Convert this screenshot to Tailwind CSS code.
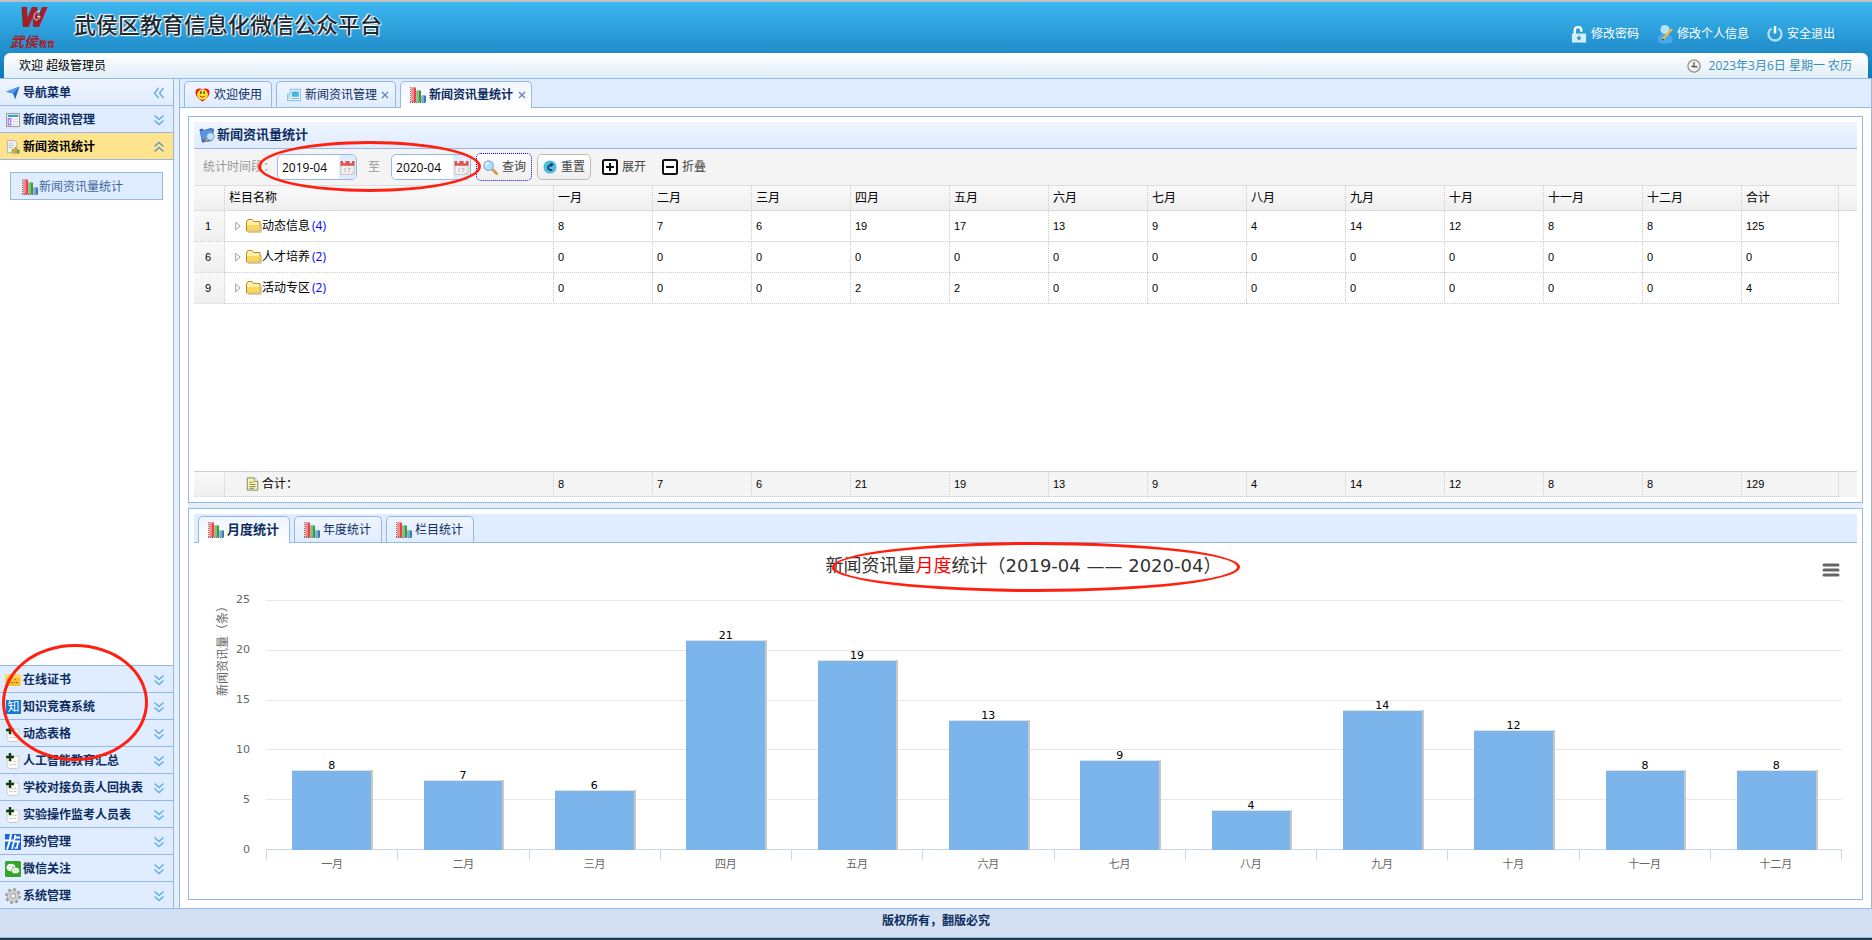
<!DOCTYPE html>
<html lang="zh-CN">
<head>
  <meta charset="UTF-8" />
  <title>武侯区教育信息化微信公众平台</title>
  <meta name="viewport" content="width=device-width, initial-scale=1.0" />
  <script src="https://cdn.jsdelivr.net/npm/@tailwindcss/browser@4"></script>
</head>
<body class="flex h-screen min-h-[720px] flex-col overflow-x-hidden bg-white font-['Open_Sans','Noto_Sans_CJK_SC',sans-serif] text-xs text-black">
  <!-- Icon sprite -->
  <svg class="hidden" aria-hidden="true">
    <symbol id="i-down" viewBox="0 0 12 12"><path d="M1.500 1.500 6 5.500 10.500 1.500M1.500 6.500 6 10.500 10.500 6.500" fill="none" stroke="#62b0ea" stroke-width="1.500"/></symbol>
    <symbol id="i-up" viewBox="0 0 12 12"><path d="M1.500 5.500 6 1.500 10.500 5.500M1.500 10.500 6 6.500 10.500 10.500" fill="none" stroke="#5b9fc0" stroke-width="1.500"/></symbol>
    <symbol id="i-left" viewBox="0 0 12 12"><path d="M5.500 1 1.500 6 5.500 11M10.500 1 6.500 6 10.500 11" fill="none" stroke="#62b0ea" stroke-width="1.500"/></symbol>
    <symbol id="i-nav" viewBox="0 0 16 16"><path d="M0 6.500 15.500.5 10.500 15 8 8.500z" fill="#2468cc"/><path d="M0 6.500 15.500.5 8 8.500z" fill="#5b9cf2"/></symbol>
    <symbol id="i-layout" viewBox="0 0 16 16"><path d="M.5.5h15v15H.5z" fill="#fff" stroke="#888"/><path d="M2 2h12v2.500H2z" fill="#2f9bd0"/><path d="M2.500 6.500h3v7h-3z" fill="#eee5ff" stroke="#9b6bf0" stroke-width="1.300"/><path d="M7.500 6.500H14v1H7.500zm0 3H14v1H7.500zm0 3H14v1H7.500z" fill="#b9c4d6"/></symbol>
    <symbol id="i-report" viewBox="0 0 16 16"><path d="M1.500.5h8l3 3v11h-11z" fill="#f4f4f4" stroke="#aaa"/><path d="M3 3h5v1H3zm0 2.500h6v1H3zM3 8h4v1H3z" fill="#bbb"/><path d="M6.500 10h3v5.500h-3z" fill="#8cc63f"/><path d="M9.500 8h3v7.500h-3z" fill="#e8963a"/><path d="M12.500 11h3v4.500h-3z" fill="#5aa354"/></symbol>
    <symbol id="i-bars" viewBox="0 0 16 16"><path d="M.5 0v16M0 15.500h16" stroke="#777" stroke-dasharray="1 1"/><path d="M1.500.5h4.500v15H1.500z" fill="#e8434b"/><path d="M2 1h2v13.500H2z" fill="#ff8585"/><path d="M6.500 3.500H11v12H6.500z" fill="#43953f"/><path d="M7 4h2v11H7z" fill="#7fc278"/><path d="M11.500 8.500h4.500v7h-4.500z" fill="#3c78b4"/><path d="M12 9h2v6h-2z" fill="#78aee0"/></symbol>
    <symbol id="i-smile" viewBox="0 0 16 16"><path d="M8 15.500C4 13 .5 9.500.5 5.500S5 .5 8 2.500c3-2 7.500-1 7.500 3S12 13 8 15.500z" fill="#f01818"/><circle cx="8" cy="8" r="5.700" fill="#ffe92e"/><path d="M6.300 4.500v3M9.700 4.500v3" stroke="#222" stroke-width="1.300"/><path d="M5 9.500q3 3 6 0" fill="none" stroke="#a02010"/></symbol>
    <symbol id="i-news" viewBox="0 0 16 16"><path d="M3.500 1.500h12v13h-15V7h3z" fill="#e4f2fa" stroke="#7fb5cf"/><path d="M5.500 4h8v6h-8z" fill="#45b3e6"/><path d="M5 12h9M2.500 8v5" stroke="#7fb5cf"/></symbol>
    <symbol id="i-find" viewBox="0 0 16 16"><path d="M.5 2.500 3 1.500l2 1.500 7-2 3 1-2 12-10 1.500z" fill="#2f62b5"/><path d="M1 4l13-2-4 9-7 2z" fill="#5b93dc"/><circle cx="11.500" cy="9.500" r="3.800" fill="#bfe4fa" stroke="#6fa9d8"/><path d="m9 12-3 2" stroke="#e0a060" stroke-width="2"/></symbol>
    <symbol id="i-cal" viewBox="0 0 16 16"><path d="M1 5h14v10.500H1z" fill="#f4f0ee" stroke="#c5c1bf"/><path d="M.5 1h15v5H.5z" fill="#df5450"/><path d="M4.500 0v3.500M11.500 0v3.500" stroke="#eee" stroke-width="2.500"/><path d="M5.500 13V9l-1 1M8 9h3l-2 4" fill="none" stroke="#b5b5b5"/><path d="m11 15 4-4v4z" fill="#d8d8d8"/></symbol>
    <symbol id="i-search" viewBox="0 0 16 16"><path d="m10 10 4.500 4.500" stroke="#dc963c" stroke-width="3" stroke-linecap="round"/><circle cx="6" cy="6" r="5" fill="#b4dcfa" stroke="#8db4dc" stroke-width="1.500"/><path d="M3 6a3 3 0 0 1 3-3" stroke="#fff" fill="none" stroke-width="1.500"/></symbol>
    <symbol id="i-reset" viewBox="0 0 16 16"><circle cx="8" cy="8" r="7.500" fill="#50bce0"/><path d="M10.500 11.500c-5 1-7-5-1-6" fill="none" stroke="#124560" stroke-width="2"/><path d="m8.500 2.500 4 2.700-3.500 3z" fill="#124560"/></symbol>
    <symbol id="i-plus" viewBox="0 0 16 16"><rect x="1" y="1" width="14" height="14" rx="1.500" fill="#fff" stroke="#111" stroke-width="2"/><path d="M4 8h8M8 4v8" stroke="#111" stroke-width="2"/></symbol>
    <symbol id="i-minus" viewBox="0 0 16 16"><rect x="1" y="1" width="14" height="14" rx="1.500" fill="#fff" stroke="#111" stroke-width="2"/><path d="M4 8h8" stroke="#111" stroke-width="2"/></symbol>
    <symbol id="i-folder" viewBox="0 0 16 14"><path d="M.5 11.500V3L2 .5h4L7.500 2.500h6.500v9.500H.5z" fill="#fff0a8" stroke="#b88622"/><path d="M1 6h12.500v5.500H1z" fill="#f8d75e"/><path d="M2 13.200h13.200V5" fill="none" stroke="#c9b98f"/></symbol>
    <symbol id="i-file" viewBox="0 0 14 16"><path d="M1 1h8l4 4v10H1z" fill="#fdf6a0" stroke="#777"/><path d="M9 1v4h4" fill="#fff" stroke="#777"/><path d="M3.500 6h4m-4 2.500h7m-7 2.500h7M3.500 13h5" stroke="#777"/></symbol>
    <symbol id="i-card" viewBox="0 0 16 16"><path d="M.5 2h15v12H.5z" fill="#f6c02c"/><path d="M.5 2h15v3.500H.5z" fill="#ffdc66"/><path d="M3 7.500h1m1 0h1m4 0h1M3 10.500h2m1 0h2m1 0h1m1 0h2" stroke="#946810"/></symbol>
    <symbol id="i-form" viewBox="0 0 16 16"><path d="M2 3h12v11l-2 1.500H4L2 13z" fill="#fafaf7" stroke="#cdcdc6"/><path d="M4.500 8.500h3m1 0h3m-7 3h3m1 0h3" stroke="#ccc"/><path d="M1 4h8M5 0v8" stroke="#123e0c" stroke-width="2.500"/></symbol>
    <symbol id="i-book" viewBox="0 0 16 16"><path d="M0 0h16v16H0z" fill="#1769dd"/><path d="M0 6.500h8M6 0 4.500 8 2 15.500M10 3.500h5M9 7.500h6" stroke="#fff" stroke-width="2" fill="none"/><path d="M10.500 1 7 15M13 8l-1 6h-2.500" stroke="#fff" stroke-width="1.700" fill="none"/></symbol>
    <symbol id="i-wechat" viewBox="0 0 16 16"><rect width="16" height="16" rx="1.500" fill="#35a52a"/><ellipse cx="6" cy="6.500" rx="4.500" ry="3.800" fill="#fff"/><ellipse cx="10.500" cy="9.500" rx="4" ry="3.300" fill="#fff" stroke="#35a52a" stroke-width=".7"/><path d="M4.500 5.500h.8M7.500 5.500h.8M9 9h.8M11.500 9h.8" stroke="#35a52a"/></symbol>
    <symbol id="i-gear" viewBox="0 0 16 16"><circle cx="8" cy="8" r="6.700" fill="none" stroke="#9c9c9c" stroke-width="2.500" stroke-dasharray="2.800 2.460"/><circle cx="8" cy="8" r="4.300" fill="none" stroke="#a8a8a8" stroke-width="3.400"/><circle cx="8" cy="8" r="4.200" fill="none" stroke="#d6d6d6" stroke-width="2"/><circle cx="8" cy="8" r="2.300" fill="#f5f8ff" stroke="#999" stroke-width=".8"/></symbol>
    <symbol id="i-lock" viewBox="0 0 16 18"><path d="M3.500 9V4.500a3.500 3.500 0 0 1 7 0V6" fill="none" stroke="#fff" stroke-width="2.500"/><path d="M.5 8h15v9.500H.5z" fill="#d5f0fc"/><path d="M8 10v4M6 12l2 2.500 2-2.500" stroke="#2a96cd" stroke-width="1.500" fill="none"/></symbol>
    <symbol id="i-user" viewBox="0 0 16 20"><path d="M1 18c-2-6 3-7 3-9 0 0-2-8 4-8s4 8 4 8c0 2 5 3 3 9-3 2-11 2-14 0z" fill="#48a8f0"/><circle cx="8" cy="5.500" r="4.500" fill="#b5e2fc"/><path d="M5.500 15.500 15 5" stroke="#f2b63a" stroke-width="2.500"/><path d="m5 16 1.500-.5L6 15z" stroke="#444"/></symbol>
    <symbol id="i-power" viewBox="0 0 16 16"><path d="M4.500 2.500a6.500 6.500 0 1 0 7 0" fill="none" stroke="#b5e0f5" stroke-width="2.300"/><path d="M8 0v7.500" stroke="#fff" stroke-width="2.500"/></symbol>
    <symbol id="i-clock" viewBox="0 0 16 16"><circle cx="8" cy="8" r="7" fill="#f4f4ee" stroke="#909090" stroke-width="1.500"/><path d="M8 3.500V9h4M5 8.500h3" fill="none" stroke="#444" stroke-width="1.300"/></symbol>
    <symbol id="i-tri" viewBox="0 0 6 10"><path d="M.7 1.200 5.200 5 .7 8.800z" fill="#fff" stroke="#a0a0a0"/></symbol>
  </svg>

  <!-- Header -->
  <header class="border-t-2 border-[#c0c0c0] bg-linear-to-b from-[#3cb7ef] to-[#0f78b8]">
    <div class="flex h-[51px] items-start">
      <svg class="ml-2 h-12 w-12 shrink-0" viewBox="0 0 48 48" fill="#a3202a" stroke="#a3202a" role="img" aria-label="武侯教育">
        <text x="13" y="24" font-family="Liberation Sans" font-size="25" font-weight="bold" font-style="italic" stroke-width="2">W</text>
        <path d="M32 9c-6 0-8 8-4 9 2 0 4-2 4-4l-3 1" fill="none" stroke="#d9edf8" stroke-width="1"/>
        <text x="2" y="45" font-family="Noto Sans CJK SC" font-size="14" font-weight="bold" font-style="italic" stroke="none">武侯</text>
        <text x="31" y="45" font-family="Noto Sans CJK SC" font-size="8" font-weight="bold" stroke="none">教育</text>
      </svg>
      <h1 class="ml-[18px] text-[22px] leading-11 font-medium text-[#1c2a33] text-shadow-[0_0_2px_#fff,0_0_2px_#fff,1px_1px_1px_#fff,-1px_-1px_1px_#fff]">武侯区教育信息化微信公众平台</h1>
      <nav class="mt-5 mr-[37px] ml-auto flex items-center gap-[18px] text-white">
        <a href="#" class="flex h-6 items-center gap-1"><svg class="h-[17px] w-4"><use href="#i-lock"/></svg>修改密码</a>
        <a href="#" class="flex h-6 items-center gap-1"><svg class="h-5 w-4"><use href="#i-user"/></svg>修改个人信息</a>
        <a href="#" class="flex h-6 items-center gap-1"><svg class="size-4"><use href="#i-power"/></svg>安全退出</a>
      </nav>
    </div>
    <div class="mx-1 flex h-[25px] items-center justify-between rounded-t-md bg-linear-to-b from-white to-[#e0eef7] pr-4 pl-[15px]">
      <span>欢迎 超级管理员</span>
      <span class="flex items-center gap-2 text-[#3c8dbc]"><svg class="size-[14px]"><use href="#i-clock"/></svg>2023年3月6日 星期一 农历</span>
    </div>
  </header>

  <div class="flex min-h-0 flex-1 border-t border-[#95b8e7] bg-[#e6eef8]">
    <!-- Sidebar -->
    <aside class="flex w-[174px] shrink-0 flex-col border-r border-[#95b8e7] bg-white font-bold text-[#0e2d5f]">
      <div class="flex h-[27px] items-center gap-[3px] border-b border-[#95b8e7] bg-linear-to-b from-[#eff5ff] to-[#e0ecff] pt-0.5 pr-2 pl-1.5"><svg class="size-[14px]"><use href="#i-nav"/></svg>导航菜单<button type="button" class="ml-auto" aria-label="收起"><svg class="size-3"><use href="#i-left"/></svg></button></div>
      <button type="button" class="flex h-[27px] items-center gap-[3px] border-b border-[#95b8e7] bg-[#e0ecff] pt-0.5 pr-2 pl-1.5"><svg class="h-4 w-[14px]" preserveAspectRatio="none"><use href="#i-layout"/></svg>新闻资讯管理<svg class="ml-auto size-3"><use href="#i-down"/></svg></button>
      <button type="button" class="flex h-[27px] items-center gap-[3px] border-b border-[#95b8e7] bg-[#ffe48d] pt-0.5 pr-2 pl-1.5 text-black"><svg class="h-4 w-[14px]"><use href="#i-report"/></svg>新闻资讯统计<svg class="ml-auto size-3"><use href="#i-up"/></svg></button>
      <div class="flex-1 px-2.5 py-3 font-normal">
        <a href="#" class="flex h-7 items-center gap-px border border-[#95b8e7] bg-[#e0ecff] pt-0.5 pl-[11px] text-[#3f66a0]"><svg class="size-4"><use href="#i-bars"/></svg>新闻资讯量统计</a>
      </div>
      <div id="menu" class="relative">
        <div class="pointer-events-none absolute -top-[21px] left-0.5 h-[117px] w-[146px] rounded-[50%] border-3 border-[#ff2010]"></div>
      </div>
    </aside>

    <!-- Workspace -->
    <main class="ml-[5px] flex min-w-0 flex-1 flex-col border-x border-[#95b8e7] bg-white">
      <div class="flex h-[29px] shrink-0 items-end gap-1 border-b border-[#95b8e7] bg-[#e0ecff] pl-1 text-[#0e2d5f]" role="tablist">
        <button type="button" role="tab" class="flex h-[26px] w-[88px] items-center gap-1 rounded-t-[5px] border border-b-0 border-[#95b8e7] bg-linear-to-b from-[#eff5ff] to-[#e0ecff] pl-2.5"><svg class="size-[15px]"><use href="#i-smile"/></svg>欢迎使用</button>
        <button type="button" role="tab" class="flex h-[26px] w-[120px] items-center gap-1 rounded-t-[5px] border border-b-0 border-[#95b8e7] bg-linear-to-b from-[#eff5ff] to-[#e0ecff] pl-2.5"><svg class="size-[14px]"><use href="#i-news"/></svg>新闻资讯管理<svg class="size-2" viewBox="0 0 8 8" stroke="#5f86ba" stroke-width="1.300"><path d="m1 1 6 6M7 1 1 7"/></svg></button>
        <button type="button" role="tab" aria-selected="true" class="-mb-px flex h-[27px] w-[132px] items-center gap-[3px] rounded-t-[5px] border border-b-0 border-[#95b8e7] bg-linear-to-b from-[#eff5ff] to-white pl-[9px] font-bold"><svg class="size-4"><use href="#i-bars"/></svg>新闻资讯量统计<svg class="ml-0.5 size-2" viewBox="0 0 8 8" stroke="#5f86ba" stroke-width="1.300"><path d="m1 1 6 6M7 1 1 7"/></svg></button>
      </div>

      <div class="flex min-h-0 flex-1 flex-col p-2">
        <!-- Grid panel -->
        <section class="flex min-h-0 flex-[387_0_0px] flex-col border border-[#95b8e7] p-[5px]">
          <h2 class="flex h-[27px] shrink-0 items-center gap-0.5 border-b border-[#95b8e7] bg-linear-to-b from-[#eff5ff] to-[#e0ecff] pl-[5px] text-[13px] font-bold text-[#0e2d5f]"><svg class="size-4"><use href="#i-find"/></svg>新闻资讯量统计</h2>
          <form class="relative flex h-[37px] shrink-0 items-center border-b border-[#ddd] bg-[#f4f4f4] pl-[9px] text-[#444]" onsubmit="return false">
            <label for="from" class="w-[74px] text-[#999]">统计时间段：</label>
            <span class="flex h-[26px] w-20 items-center overflow-hidden rounded-[5px] border border-[#95b8e7] bg-white">
              <input id="from" type="text" value="2019-04" class="h-full w-[61px] pl-1 text-black outline-none" />
              <button type="button" class="h-full w-[17px] bg-[#e0ecff]" aria-label="选择开始月份"><svg class="mx-auto size-[15px]"><use href="#i-cal"/></svg></button>
            </span>
            <label for="to" class="px-[11px] text-[#999]">至</label>
            <span class="flex h-[26px] w-20 items-center overflow-hidden rounded-[5px] border border-[#95b8e7] bg-white">
              <input id="to" type="text" value="2020-04" class="h-full w-[61px] pl-1 text-black outline-none" />
              <button type="button" class="h-full w-[17px] bg-[#e0ecff]" aria-label="选择结束月份"><svg class="mx-auto size-[15px]"><use href="#i-cal"/></svg></button>
            </span>
            <button type="submit" class="ml-[5px] flex h-7 w-14 items-center gap-1 rounded-[5px] border border-dotted border-[#0000e0] bg-linear-to-b from-white to-[#eee] pl-1.5"><svg class="size-[15px]"><use href="#i-search"/></svg>查询</button>
            <button type="reset" class="ml-[5px] flex h-[26px] w-[54px] items-center gap-1 rounded-[5px] border border-[#bbb] bg-linear-to-b from-white to-[#eee] pl-[5px]"><svg class="size-[14px]"><use href="#i-reset"/></svg>重置</button>
            <button type="button" class="ml-[11px] flex items-center gap-1"><svg class="size-4"><use href="#i-plus"/></svg>展开</button>
            <button type="button" class="ml-4 flex items-center gap-1"><svg class="size-4"><use href="#i-minus"/></svg>折叠</button>
            <span class="pointer-events-none absolute -top-2 left-16 h-[51px] w-[223px] rounded-[50%] border-3 border-[#ff2010]"></span>
          </form>
          <div class="min-h-0 flex-1 overflow-hidden">
            <table class="w-full table-fixed border-separate border-spacing-0">
              <colgroup><col class="w-[31px]" /><col /><col class="w-[99px]" span="12" /><col class="w-[97px]" /><col class="w-[18px]" /></colgroup>
              <thead id="head"></thead>
              <tbody id="rows"></tbody>
            </table>
          </div>
          <table class="w-full shrink-0 table-fixed border-separate border-spacing-0">
            <colgroup><col class="w-[31px]" /><col /><col class="w-[99px]" span="12" /><col class="w-[97px]" /><col class="w-[18px]" /></colgroup>
            <tbody id="total"></tbody>
          </table>
        </section>
        <div class="h-[5px] shrink-0 bg-[#e6eef8]"></div>

        <!-- Chart panel -->
        <section class="flex min-h-0 flex-[392_0_0px] flex-col border border-[#95b8e7] p-[5px]">
          <div class="flex h-[29px] shrink-0 items-end gap-1 border-b border-[#95b8e7] bg-[#e0ecff] pl-1 text-[#0e2d5f]" role="tablist">
            <button type="button" role="tab" aria-selected="true" class="-mb-px flex h-[27px] w-[92px] items-center gap-[3px] rounded-t-[5px] border border-b-0 border-[#95b8e7] bg-linear-to-b from-[#eff5ff] to-white pl-[9px] text-[13px] font-bold"><svg class="size-4"><use href="#i-bars"/></svg>月度统计</button>
            <button type="button" role="tab" class="flex h-[26px] w-[88px] items-center gap-[3px] rounded-t-[5px] border border-b-0 border-[#95b8e7] bg-linear-to-b from-[#eff5ff] to-[#e0ecff] pl-[9px]"><svg class="size-4"><use href="#i-bars"/></svg>年度统计</button>
            <button type="button" role="tab" class="flex h-[26px] w-[88px] items-center gap-[3px] rounded-t-[5px] border border-b-0 border-[#95b8e7] bg-linear-to-b from-[#eff5ff] to-[#e0ecff] pl-[9px]"><svg class="size-4"><use href="#i-bars"/></svg>栏目统计</button>
          </div>
          <div class="flex min-h-0 flex-1 flex-col pb-11 font-['DejaVu_Sans','Noto_Sans_CJK_SC',sans-serif] text-[11px] text-[#666]">
            <div class="relative h-[57px] shrink-0 pr-1 text-center">
              <h3 class="text-lg leading-[46px] text-[#333]">新闻资讯量<span class="text-[#ff0000]">月度</span>统计（2019-04 —— 2020-04）</h3>
              <span class="pointer-events-none absolute -top-px left-1/2 -ml-[194px] h-[50px] w-[408px] rounded-[50%] border-3 border-[#ff2010]"></span>
              <button type="button" class="absolute top-5 right-[17px]" aria-label="图表菜单"><svg class="h-[14px] w-[18px]" viewBox="0 0 18 14" stroke="#666" stroke-width="3" stroke-linecap="round"><path d="M2 2h14M2 7h14M2 12h14"/></svg></button>
            </div>
            <div class="flex min-h-0 flex-1 pr-[15px]">
              <div class="flex w-[72px] justify-between pr-4 pl-[21px]">
                <span class="rotate-180 self-start text-xs leading-4 [writing-mode:vertical-rl] [text-orientation:sideways]">新闻资讯量（条）</span>
                <div class="flex flex-col justify-between text-right leading-0">
                  <span class="h-0">25</span><span class="h-0">20</span><span class="h-0">15</span><span class="h-0">10</span><span class="h-0">5</span><span class="h-0">0</span>
                </div>
              </div>
              <div class="relative min-w-0 flex-1">
                <div class="absolute inset-0 flex flex-col justify-between">
                  <i class="h-px bg-[#e6e6e6]"></i><i class="h-px bg-[#e6e6e6]"></i><i class="h-px bg-[#e6e6e6]"></i><i class="h-px bg-[#e6e6e6]"></i><i class="h-px bg-[#e6e6e6]"></i><i class="h-px bg-[#ccd6eb]"></i>
                </div>
                <div id="bars" class="absolute inset-0 flex"></div>
                <div id="months" class="absolute inset-x-0 top-full flex border-r border-[#ccd6eb]"></div>
              </div>
            </div>
          </div>
        </section>
      </div>
    </main>
  </div>

  <footer class="shrink-0 border-b-2 border-[#203a48]">
    <p class="h-[30px] border-y border-[#95b8e7] bg-[#d2e0f2] text-center leading-6 font-bold text-[#0e2d5f]">版权所有，翻版必究</p>
  </footer>

  <script>
    const months = ['一月', '二月', '三月', '四月', '五月', '六月', '七月', '八月', '九月', '十月', '十一月', '十二月'];
    const rows = [
      { no: 1, name: '动态信息', count: 4, values: [8, 7, 6, 19, 17, 13, 9, 4, 14, 12, 8, 8, 125] },
      { no: 6, name: '人才培养', count: 2, values: [0, 0, 0, 0, 0, 0, 0, 0, 0, 0, 0, 0, 0] },
      { no: 9, name: '活动专区', count: 2, values: [0, 0, 0, 2, 2, 0, 0, 0, 0, 0, 0, 0, 4] },
    ];
    const totals = [8, 7, 6, 21, 19, 13, 9, 4, 14, 12, 8, 8, 129];
    const menu = [
      ['card', '在线证书'], ['know', '知识竞赛系统'], ['form', '动态表格'], ['form', '人工智能教育汇总'],
      ['form', '学校对接负责人回执表'], ['form', '实验操作监考人员表'], ['book', '预约管理'], ['wechat', '微信关注'], ['gear', '系统管理'],
    ];

    document.getElementById('menu').insertAdjacentHTML('afterbegin', menu.map(([icon, text]) => `
      <button type="button" class="flex h-[27px] w-full items-center gap-0.5 border-t border-[#95b8e7] bg-[#e0ecff] pt-0.5 pr-2 pl-[5px]">
        ${icon === 'know'
          ? '<span class="ml-px w-[15px] bg-[#1478d4] text-center leading-[14px] font-normal text-white">知</span>'
          : `<svg class="size-4"><use href="#i-${icon}"/></svg>`}
        ${text}<svg class="ml-auto size-3"><use href="#i-down"/></svg>
      </button>`).join(''));

    document.getElementById('head').innerHTML = `
      <tr class="h-[25px] bg-linear-to-b from-[#f9f9f9] to-[#efefef] text-left">
        <th class="border-r border-b border-r-[#ccc] border-b-[#ddd] [border-right-style:dotted]"></th>
        ${['栏目名称', ...months, '合计'].map((t) => `<th class="border-r border-b border-r-[#ccc] border-b-[#ddd] pl-1 font-normal [border-right-style:dotted]">${t}</th>`).join('')}
        <th class="border-b border-[#ddd]"></th>
      </tr>`;

    document.getElementById('rows').innerHTML = rows.map((r) => `
      <tr class="h-[31px]">
        <td class="border-r border-b border-dotted border-[#ccc] bg-linear-to-b from-[#f9f9f9] to-[#efefef] pr-0.5 text-center font-['Liberation_Sans'] text-[11px]">${r.no}</td>
        <td class="border-r border-b border-dotted border-[#ccc] pl-2.5">
          <div class="flex items-center"><svg class="mr-[5px] h-2.5 w-1.5"><use href="#i-tri"/></svg><svg class="h-[14px] w-4"><use href="#i-folder"/></svg>${r.name}<span class="pl-0.5 text-[#0000ff]">(${r.count})</span></div>
        </td>
        ${r.values.map((v) => `<td class="border-r border-b border-dotted border-[#ccc] pl-1 font-['Liberation_Sans'] text-[11px]">${v}</td>`).join('')}
        <td></td>
      </tr>`).join('');

    document.getElementById('total').innerHTML = `
      <tr class="h-[26px] bg-[#f4f4f4]">
        <td class="border-t border-r border-b border-dotted border-[#ccc] bg-linear-to-b from-[#f9f9f9] to-[#efefef] [border-top-style:solid]"></td>
        <td class="border-t border-r border-b border-dotted border-[#ccc] pl-[21px] [border-top-style:solid]">
          <div class="flex items-center"><svg class="mr-[3px] h-[14px] w-[13px]"><use href="#i-file"/></svg>合计：</div>
        </td>
        ${totals.map((v) => `<td class="border-t border-r border-b border-dotted border-[#ccc] pl-1 font-['Liberation_Sans'] text-[11px] [border-top-style:solid]">${v}</td>`).join('')}
        <td class="border-t border-[#ccc]"></td>
      </tr>`;

    document.getElementById('bars').innerHTML = months.map((m, i) => `
      <div class="flex h-full flex-1 flex-col items-center justify-end">
        <span class="-mb-0.5 leading-3 text-black">${totals[i]}</span>
        <div class="w-3/5 border-t border-[#e2e2e2] bg-[#7cb5ec] shadow-[2px_0_0_#c8c8c8]" style="height: ${totals[i] * 4}%"></div>
      </div>`).join('');

    document.getElementById('months').innerHTML = months.map((m) => `
      <div class="h-2.5 flex-1 border-l border-[#ccd6eb] pt-[7px] text-center leading-4">${m}</div>`).join('');
  </script>
</body>
</html>
